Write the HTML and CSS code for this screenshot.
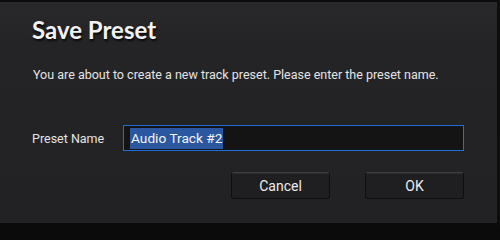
FILE: index.html
```html
<!DOCTYPE html>
<html>
<head>
<meta charset="utf-8">
<link rel="stylesheet" href="styles.css">
</head>
<body>
<div class="screen">
  <div class="dialog">
    <h1 class="title">Save Preset</h1>
    <p class="message">You are about to create a new track preset. Please enter the preset name.</p>
    <div class="field">
      <label class="label">Preset Name</label>
      <div class="input"><span class="sel">Audio Track #2</span></div>
    </div>
    <div class="actions">
      <div class="btn">Cancel</div>
      <div class="btn">OK</div>
    </div>
  </div>
  <div class="edge"></div>
</div>
</body>
</html>
```
FILE: styles.css
```css
html, body {
  margin: 0;
  padding: 0;
  background: #0b0b0c;
  overflow: hidden;
}
.screen {
  width: 500px;
  height: 226px;
  display: flex;
  overflow: hidden;
}
.dialog {
  width: 497px;
  height: 221px;
  margin-top: 2px;
  box-sizing: border-box;
  background: linear-gradient(#29292c 0px, #242427 40px, #222225 100%);
  padding: 0 0 0 32px;
  display: flex;
  flex-direction: column;
  font-family: Roboto, "Liberation Sans", sans-serif;
  color: #e6e6e6;
}
.edge {
  flex: 1;
  background: #0d0d0e;
}
.title {
  margin: 13px 0 0 0;
  font-family: Lato, "Open Sans", sans-serif;
  font-weight: 700;
  font-size: 24px;
  line-height: 30px;
  color: #f2f2f2;
  text-shadow: 1px 2px 2px rgba(0,0,0,0.8);
}
.message {
  margin: 22px 0 0 1px;
  font-size: 12.5px;
  line-height: 16px;
  color: #e4e4e4;
}
.field {
  margin-top: 42px;
  display: flex;
  align-items: center;
}
.label {
  width: 91px;
  font-size: 12.5px;
  color: #e4e4e4;
}
.input {
  width: 341px;
  height: 26px;
  box-sizing: border-box;
  border: 1.5px solid #1d6fdc;
  background: #141415;
  padding: 1.5px 0 1.5px 6px;
  display: flex;
}
.sel {
  background: #2b57a1;
  color: #f4f4f4;
  font-size: 13.7px;
  line-height: 21px;
  padding: 0 1px;
}
.actions {
  margin-top: 21px;
  display: flex;
  padding-left: 199px;
  gap: 35px;
}
.btn {
  width: 99px;
  height: 27px;
  box-sizing: border-box;
  border: 1px solid #0e0e0f;
  border-top-color: #3c3c3e;
  border-radius: 3px;
  background: #1f1f21;
  box-shadow: inset 0 1px 0 #2e2e30;
  color: #ececec;
  font-size: 14px;
  display: flex;
  align-items: center;
  justify-content: center;
}
```
